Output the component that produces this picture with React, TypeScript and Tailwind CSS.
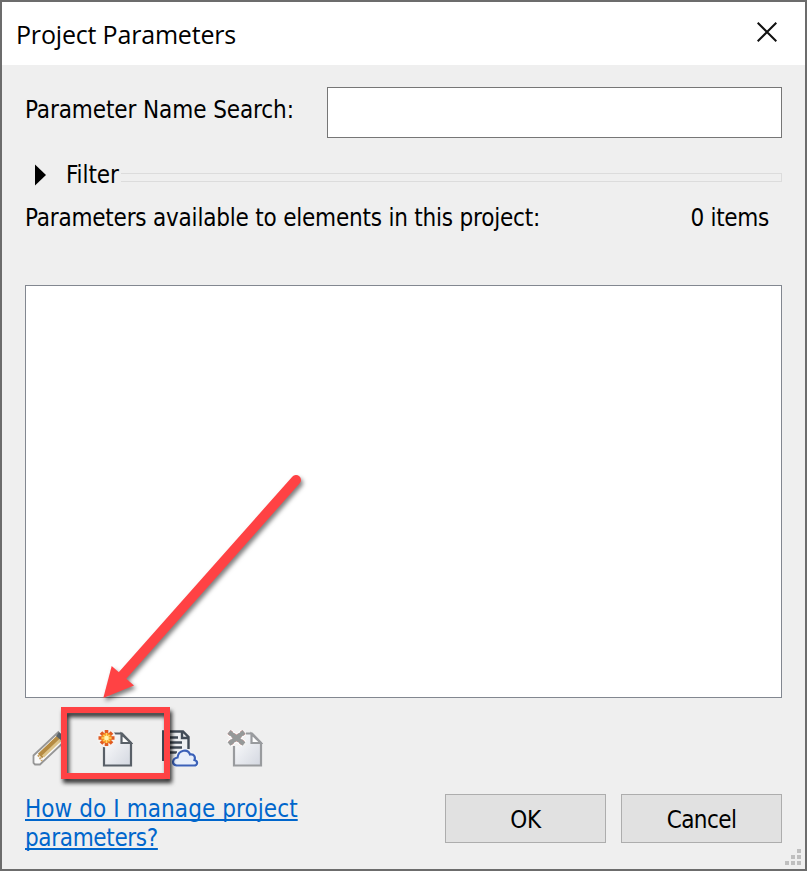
import React from "react";

const uiFont = "font-['DejaVu_Sans_Condensed','DejaVu_Sans',sans-serif] [font-stretch:condensed]";

function PencilIcon() {
  return (
    <svg width="36" height="36" viewBox="0 0 36 36" fill="none">
      <path d="M27 1 L1.500 25 L1 33 L7 34.500 L34 11 L34 2 Z" fill="#fafafa" />
      <path d="M27 1.500 L1.500 25.500 V33 L3 34.500 H8 L34 10" stroke="#969696" strokeWidth="1.800" />
      <path d="M29 6 L8 26" stroke="#b58b42" strokeWidth="6" />
      <path d="M31 7.500 L11 26.500" stroke="#dcc48c" strokeWidth="3" />
      <path d="M27 2 L34 8 L30 11 L24 6 Z" fill="#596269" />
      <path d="M6 25 L10 31" stroke="#c8a264" strokeWidth="2" strokeDasharray="2 1" />
    </svg>
  );
}

function Page({ stroke }: { stroke: string }) {
  return (
    <>
      <path d="M7 3.500 H25 L34 13 V35.500 H7 Z" fill="url(#paper)" stroke={stroke} strokeWidth="2.200" />
      <path d="M24.500 4 V13 H34 Z" fill="#fff" stroke={stroke} strokeWidth="2.200" />
    </>
  );
}

function NewIcon() {
  return (
    <svg width="36" height="37" viewBox="0 0 36 37" fill="none">
      <defs>
        <linearGradient id="paper" x1="0" y1="0" x2="1" y2="1">
          <stop stopColor="#ffffff" />
          <stop offset="1" stopColor="#d3d7e0" />
        </linearGradient>
      </defs>
      <Page stroke="#596068" />
      <circle cx="9.500" cy="8" r="9.500" fill="#f4f2f0" />
      <path d="M9.500 0 V16 M1.500 8 H17.500 M4 2.500 L15 13.500 M15 2.500 L4 13.500" stroke="#e05a22" strokeWidth="3.600" />
      <circle cx="9.500" cy="8" r="5.200" fill="#f68a20" />
      <path d="M9.500 3 V13 M4.500 8 H14.500 M6.500 5 L12.500 11 M12.500 5 L6.500 11" stroke="#ffd45f" strokeWidth="1.600" />
      <circle cx="9.500" cy="8" r="2.200" fill="#fff3b5" />
    </svg>
  );
}

function CloudIcon() {
  const cloud = "M14.500 35.500 C9.500 34.500 10 28.500 15.500 27.500 C16.500 19.500 26 18.500 28 24.500 C32.500 23.500 33.500 27.500 32.500 30 C36.500 31.500 35.500 35.500 32 35.500 Z";
  return (
    <svg width="37" height="37" viewBox="0 0 37 37" fill="none" className="-mr-px">
      <path d="M1 1 H21 L27 7 V31 H1 Z" fill="#eef0f2" />
      <path d="M1 31 V1.500 H21 L26.500 7 V19 M20 1.500 V8 H27" stroke="#414b57" strokeWidth="2.400" />
      <path d="M6 7.500 H16 M6 12.500 H20 M6 17.500 H20 M6 22.500 H15" stroke="#414b57" strokeWidth="2.400" />
      <path d={cloud} fill="#e8effb" stroke="#f4f6f9" strokeWidth="4.500" />
      <path d={cloud} fill="#e8effb" stroke="#3b61b8" strokeWidth="2.200" />
    </svg>
  );
}

function DeleteIcon() {
  return (
    <svg width="36" height="37" viewBox="0 0 36 37" fill="none">
      <Page stroke="#999b9e" />
      <path d="M1 0 H19 V16 H1 Z" fill="#f1f1f1" />
      <path d="M2 2 L17 14 M17 2 L2 14" stroke="#fff" strokeWidth="7" />
      <path d="M2 2 L17 14 M17 2 L2 14" stroke="#cf9a98" strokeWidth="5.400" strokeDasharray="3 2" />
      <path d="M2 2 L17 14 M17 2 L2 14" stroke="#969999" strokeWidth="4.400" />
    </svg>
  );
}

function Annotation() {
  return (
    <svg className="pointer-events-none absolute inset-0" width="807" height="871" viewBox="0 0 807 871">
      <g className="[filter:drop-shadow(2px_4px_2px_rgba(0,0,0,0.8))]">
        <rect x="64" y="710" width="103" height="66" fill="none" stroke="#ff4244" strokeWidth="6" />
      </g>
      <g className="[filter:drop-shadow(2px_3px_2px_rgba(0,0,0,0.5))]">
        <path d="M296 480 L122 676" stroke="#ff4244" strokeWidth="10" strokeLinecap="round" />
        <path d="M103.300 698 L111.700 666 L134 685.500 Z" fill="#ff4244" />
      </g>
    </svg>
  );
}

// Slivers of the drawing that show through the translucent window border.
const ticks = [
  "left-[213px] top-0 h-[2px] w-px", "left-[216px] top-0 h-[2px] w-px",
  "left-[232px] top-0 h-[2px] w-px", "left-[235px] top-0 h-[2px] w-px",
  "left-[754px] top-0 h-[2px] w-px", "left-[756px] top-0 h-[2px] w-px",
  "left-[772px] top-0 h-[2px] w-px", "left-[775px] top-0 h-[2px] w-px",
  "left-0 top-[179px] h-px w-[2px]", "left-0 top-[182px] h-px w-[2px]",
  "left-0 top-[197px] h-px w-[2px]", "left-0 top-[200px] h-px w-[2px]",
  "left-0 top-[460px] h-px w-[2px]", "left-0 top-[462px] h-px w-[2px]",
  "left-0 top-[548px] h-px w-[2px]", "left-0 top-[551px] h-px w-[2px]",
  "left-[805px] top-[75px] h-px w-[2px]", "left-[805px] top-[179px] h-px w-[2px]",
  "left-[805px] top-[182px] h-px w-[2px]", "left-[805px] top-[197px] h-px w-[2px]",
  "left-[805px] top-[200px] h-px w-[2px]", "left-[805px] top-[460px] h-px w-[2px]",
  "left-[805px] top-[478px] h-px w-[2px]", "left-[805px] top-[794px] h-px w-[2px]",
  "left-[805px] top-[863px] h-px w-[2px]",
  "left-[54px] top-[869px] h-[2px] w-px", "left-[494px] top-[869px] h-[2px] w-px",
  "left-[497px] top-[869px] h-[2px] w-px", "left-[512px] top-[869px] h-[2px] w-px",
  "left-[515px] top-[869px] h-[2px] w-px",
];

export default function App() {
  return (
    <div className={`relative flex h-[871px] w-[807px] flex-col overflow-hidden border-2 border-[#6c6c6c] bg-[#efefef] text-[24px] leading-[29px] whitespace-nowrap text-black ${uiFont}`}>
      <header className="flex h-[63px] shrink-0 items-center justify-between bg-white pr-[28px] pl-[14px]">
        <h1 className="pt-[2px] font-['Open_Sans',sans-serif] text-[25px] tracking-[-0.18px] [font-stretch:normal]">Project Parameters</h1>
        <button aria-label="Close" className="mb-[3px] flex">
          <svg width="20" height="20" viewBox="0 0 20 20" fill="none" stroke="#111" strokeWidth="2">
            <path d="M0.700 0.700 L19.300 19.300 M19.300 0.700 L0.700 19.300" />
          </svg>
        </button>
      </header>

      <main className="flex grow flex-col px-[23px] pt-[22px]">
        <div className="flex h-[51px] justify-between">
          <label className="pt-[9px] tracking-[-0.1px]">Parameter Name Search:</label>
          <input className="h-[51px] w-[455px] border border-[#767676] bg-white" />
        </div>

        <div className="mt-[23px] flex h-[29px] items-center">
          <svg className="mb-px ml-[10px]" width="12" height="22" viewBox="0 0 12 22"><path d="M0 0.500 L11 11 L0 21.500 Z" /></svg>
          <span className="ml-[19px] tracking-[-0.1px]">Filter</span>
          <div className="mt-[4px] ml-[2px] h-[9px] grow border border-l-0 border-[#dcdcdc]" />
        </div>

        <div className="mt-[14px] flex h-[29px] justify-between pr-[13px]">
          <span className="tracking-[-0.21px]">Parameters available to elements in this project:</span>
          <span className="tracking-[-0.3px]">0 items</span>
        </div>

        <div className="mt-[52px] h-[413px] shrink-0 border border-[#828790] bg-white" />

        <div className="mt-[32px] ml-[7px] flex h-[37px] shrink-0 gap-[29px]">
          <PencilIcon />
          <NewIcon />
          <CloudIcon />
          <DeleteIcon />
        </div>

        <footer className="mt-[27px] flex justify-between">
          <a className="block pt-px text-[#0066cc] underline decoration-2 underline-offset-[2px] [text-decoration-skip-ink:none]">
            <span className="tracking-[0.08px]">How do I manage project</span>
            <br />
            <span className="tracking-[-0.35px]">parameters?</span>
          </a>
          <div className="flex gap-[15px]">
            <button className="h-[49px] w-[161px] border border-[#adadad] bg-[#e1e1e1] pt-[3px] tracking-[-0.4px]">OK</button>
            <button className="h-[49px] w-[161px] border border-[#adadad] bg-[#e1e1e1] pt-[3px] tracking-[-0.6px]">Cancel</button>
          </div>
        </footer>
      </main>

      <svg className="absolute right-[3px] bottom-[3px]" width="17" height="17" viewBox="0 0 17 17" fill="#bfbfbf">
        <path d="M12 0h4v4h-4zM6 6h4v4h-4zM12 6h4v4h-4zM0 12h4v4h-4zM6 12h4v4h-4zM12 12h4v4h-4z" />
      </svg>
      <div className="pointer-events-none absolute -top-[2px] -left-[2px] h-[871px] w-[807px]">
        {ticks.map((t) => (
          <i key={t} className={`absolute bg-[#222] ${t}`} />
        ))}
        <Annotation />
      </div>
    </div>
  );
}
